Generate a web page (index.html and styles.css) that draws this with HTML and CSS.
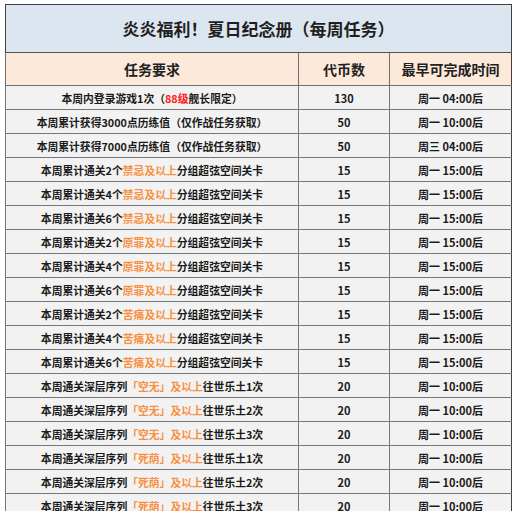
FILE: index.html
```html
<!DOCTYPE html>
<html lang="zh-CN">
<head>
<meta charset="utf-8">
<title>炎炎福利！夏日纪念册（每周任务）</title>
<link rel="stylesheet" href="styles.css">
</head>
<body>
<table class="sheet">
  <colgroup>
    <col class="c-task">
    <col class="c-coin">
    <col class="c-time">
  </colgroup>
  <thead>
    <tr class="title-row"><th colspan="3">炎炎福利！夏日纪念册（每周任务）</th></tr>
    <tr class="head-row"><th>任务要求</th><th>代币数</th><th>最早可完成时间</th></tr>
  </thead>
  <tbody>
    <tr><td>本周内登录游戏1次（<span class="red">88级</span>舰长限定）</td><td>130</td><td>周一 04:00后</td></tr>
    <tr><td>本周累计获得3000点历练值（仅作战任务获取）</td><td>50</td><td>周一 10:00后</td></tr>
    <tr><td>本周累计获得7000点历练值（仅作战任务获取）</td><td>50</td><td>周三 04:00后</td></tr>
    <tr><td>本周累计通关2个<span class="or">禁忌及以上</span>分组超弦空间关卡</td><td>15</td><td>周一 15:00后</td></tr>
    <tr><td>本周累计通关4个<span class="or">禁忌及以上</span>分组超弦空间关卡</td><td>15</td><td>周一 15:00后</td></tr>
    <tr><td>本周累计通关6个<span class="or">禁忌及以上</span>分组超弦空间关卡</td><td>15</td><td>周一 15:00后</td></tr>
    <tr><td>本周累计通关2个<span class="or">原罪及以上</span>分组超弦空间关卡</td><td>15</td><td>周一 15:00后</td></tr>
    <tr><td>本周累计通关4个<span class="or">原罪及以上</span>分组超弦空间关卡</td><td>15</td><td>周一 15:00后</td></tr>
    <tr><td>本周累计通关6个<span class="or">原罪及以上</span>分组超弦空间关卡</td><td>15</td><td>周一 15:00后</td></tr>
    <tr><td>本周累计通关2个<span class="or">苦痛及以上</span>分组超弦空间关卡</td><td>15</td><td>周一 15:00后</td></tr>
    <tr><td>本周累计通关4个<span class="or">苦痛及以上</span>分组超弦空间关卡</td><td>15</td><td>周一 15:00后</td></tr>
    <tr><td>本周累计通关6个<span class="or">苦痛及以上</span>分组超弦空间关卡</td><td>15</td><td>周一 15:00后</td></tr>
    <tr><td>本周通关深层序列<span class="or">「空无」及以上</span>往世乐土1次</td><td>20</td><td>周一 10:00后</td></tr>
    <tr><td>本周通关深层序列<span class="or">「空无」及以上</span>往世乐土2次</td><td>20</td><td>周一 10:00后</td></tr>
    <tr><td>本周通关深层序列<span class="or">「空无」及以上</span>往世乐土3次</td><td>20</td><td>周一 10:00后</td></tr>
    <tr><td>本周通关深层序列<span class="or">「死荫」及以上</span>往世乐土1次</td><td>20</td><td>周一 10:00后</td></tr>
    <tr><td>本周通关深层序列<span class="or">「死荫」及以上</span>往世乐土2次</td><td>20</td><td>周一 10:00后</td></tr>
    <tr><td>本周通关深层序列<span class="or">「死荫」及以上</span>往世乐土3次</td><td>20</td><td>周一 10:00后</td></tr>
  </tbody>
</table>
</body>
</html>
```

FILE: styles.css
```css
html, body {
  margin: 0;
  padding: 0;
  background: #ffffff;
  overflow: hidden;
}
body {
  padding: 4px 0 0 5px;
  font-family: "Noto Sans CJK SC", "Noto Sans", sans-serif;
  color: #1a1a1a;
}
.sheet {
  border-collapse: collapse;
  table-layout: fixed;
  width: 506px;
  border: 1.5px solid #404040;
}
.c-task { width: 293px; }
.c-coin { width: 91px; }
.c-time { width: 122px; }
.sheet th, .sheet td {
  padding: 0;
  text-align: center;
  font-weight: bold;
  white-space: nowrap;
  overflow: hidden;
}
.title-row th {
  height: 47px;
  background: #dce6f1;
  font-size: 17px;
  color: #1f1f1f;
  border-bottom: 1.5px solid #505050;
}
.head-row th {
  height: 32px;
  background: #fde9d9;
  font-size: 14px;
  color: #222222;
  border-bottom: 1px solid #707070;
  border-left: 1px solid #707070;
}
.sheet td {
  height: 23px;
  background: #f2f2f2;
  font-size: 10.8px;
  border-bottom: 1px solid #777777;
  border-left: 1px solid #777777;
}
.sheet td:nth-child(2), .sheet td:nth-child(3) {
  font-size: 11px;
}
.red { color: #ff1a1a; }
.or { color: #f7903f; }
```
